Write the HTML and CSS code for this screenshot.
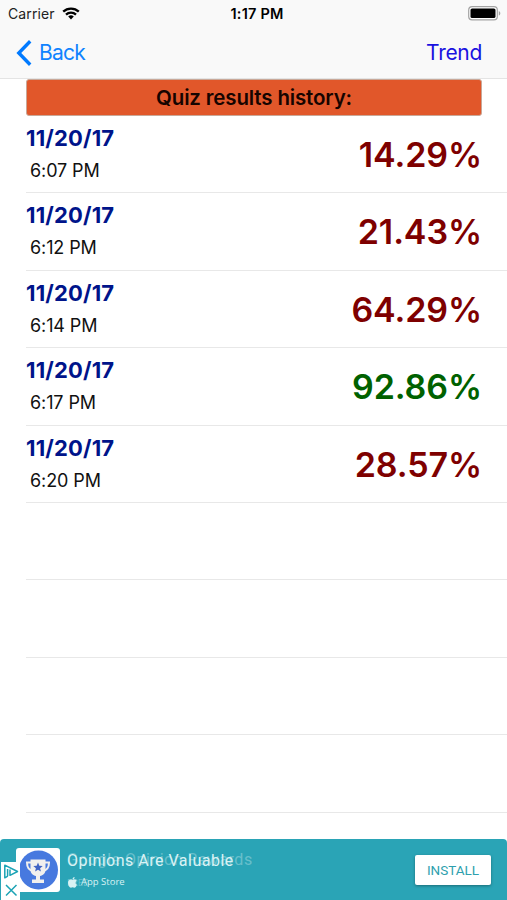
FILE: index.html
```html
<!DOCTYPE html>
<html lang="en">
<head>
  <meta charset="UTF-8" />
  <meta name="viewport" content="width=device-width, initial-scale=1.0" />
  <title>Quiz results history</title>
  <link rel="stylesheet" href="styles.css">
</head>
<body>

  <header class="top">
    <div class="status-bar">
      <div class="carrier">
        <span class="carrier-name">Carrier</span>
        <svg class="wifi" width="18" height="13" viewBox="0 0 18 13" fill="none" stroke="#000" stroke-width="2.3">
          <path d="M1.2 4.700a11.200 11.200 0 0 1 15.600 0" />
          <path d="M4 7.600a7.200 7.200 0 0 1 10 0" />
          <path d="M9 12.400L6.200 9.600a4 4 0 0 1 5.600 0z" fill="#000" stroke="none" />
        </svg>
      </div>
      <span class="clock">1:17 PM</span>
      <svg class="battery" width="33" height="15" viewBox="0 0 33 15">
        <rect x="0.7" y="0.7" width="28.6" height="13.2" rx="3.4" fill="#fff" stroke="#a3a3a3" stroke-width="1.2" />
        <rect x="2.5" y="2.5" width="25" height="9.6" rx="1.6" fill="#000" />
        <path d="M30.800 5v4.600c2-.8 2-3.800 0-4.600z" fill="#a3a3a3" />
      </svg>
    </div>
    <nav class="nav-bar">
      <a class="back" href="#">
        <svg width="16" height="26" viewBox="0 0 16 26" fill="none" stroke="#007aff" stroke-width="3.4">
          <path d="M14.200 1.300L2.800 13l11.400 11.700" />
        </svg>
        <span class="back-text">Back</span>
      </a>
      <a class="trend" href="#">Trend</a>
    </nav>
  </header>

  <main class="content">
    <h1 class="title">Quiz results history:</h1>
    <ul class="results">
      <li class="row">
        <div class="when"><span class="date">11/20/17</span><span class="time">6:07 PM</span></div>
        <span class="score bad">14.29%</span>
      </li>
      <li class="row">
        <div class="when"><span class="date">11/20/17</span><span class="time">6:12 PM</span></div>
        <span class="score bad">21.43%</span>
      </li>
      <li class="row">
        <div class="when"><span class="date">11/20/17</span><span class="time">6:14 PM</span></div>
        <span class="score bad">64.29%</span>
      </li>
      <li class="row">
        <div class="when"><span class="date">11/20/17</span><span class="time">6:17 PM</span></div>
        <span class="score good">92.86%</span>
      </li>
      <li class="row">
        <div class="when"><span class="date">11/20/17</span><span class="time">6:20 PM</span></div>
        <span class="score bad">28.57%</span>
      </li>
      <li class="row"></li>
      <li class="row"></li>
      <li class="row"></li>
      <li class="row"></li>
    </ul>
  </main>

  <footer class="ad">
    <div class="ad-icon">
      <svg width="44" height="44" viewBox="0 0 44 44">
        <circle cx="22.5" cy="22" r="19.5" fill="#4779df" />
        <path d="M16 14.500h-5c0 5 2 8 6.500 8.500M28 14.500h5c0 5-2 8-6.500 8.500" fill="none" stroke="#f1f0ee" stroke-width="2" />
        <path d="M14.500 11.500h15v10c0 4-2.500 6-5.500 6.500v3.500h4v3.500H16v-3.500h4V28c-3-.5-5.500-2.500-5.500-6.500z" fill="#f1f0ee" />
        <path d="M22 14.500l1.300 3.200 3.400.3-2.600 2.200.8 3.300-2.900-1.800-2.900 1.800.8-3.300-2.600-2.200 3.400-.3z" fill="#3f63c4" />
      </svg>
    </div>
    <div class="ad-text">
      <div class="ad-title">
        <span>Opinions Are Valuable</span>
        <span class="ghost">Google Opinion Rewards</span>
      </div>
      <div class="ad-store">
        <svg width="11" height="11" viewBox="0 0 11 11" fill="#d9f2f4">
          <path d="M5.500 3C4 2.100 1 2.500 1 5.800 1 8.500 2.600 10.800 3.900 10.700c.7-.1 1-.4 1.700-.4s1 .4 1.700.4c1.200 0 2.200-1.800 2.600-3-1.800-.8-1.800-3.100-.2-4C8.600 2.300 6.700 2.500 5.500 3z" />
          <path d="M5.500 2.500C5.400 1.300 6.400.3 7.600.1c.1 1.300-.9 2.300-2.100 2.400z" />
        </svg>
        <span>App Store</span>
        <span class="ghost store-ghost">FREE</span>
      </div>
    </div>
    <button class="install">INSTALL</button>
    <div class="ad-choices">
      <svg width="19" height="38" viewBox="0 0 19 38" fill="none" stroke="#1ba3b5" stroke-width="1.5">
        <path d="M6.800 14.200L3.800 15.800V3.200L16.500 9.500 9 13.300V7.500" stroke-linejoin="round" />
        <path d="M6.600 7v7.200" />
        <path d="M5 23l10.500 10.500M15.500 23L5 33.500" />
      </svg>
    </div>
  </footer>

</body>
</html>
```
FILE: styles.css
```css
* {
  box-sizing: border-box;
}

body {
  margin: 0;
  height: 900px;
  display: flex;
  flex-direction: column;
  overflow: hidden;
  background: #fff;
  color: #000;
  font-family: Inter, "Liberation Sans", sans-serif;
}

a {
  text-decoration: none;
}

.top {
  height: 79px;
  flex: none;
  background: #f9f9f9;
  border-bottom: 1px solid #e4e4e4;
}

.status-bar {
  height: 27px;
  padding: 0 6px 0 8px;
  display: grid;
  grid-template-columns: 1fr auto 1fr;
  align-items: center;
}

.carrier {
  display: flex;
  align-items: center;
  gap: 7px;
  font-size: 14px;
  letter-spacing: 0.1px;
  color: #222;
}

.clock {
  margin-left: 5px;
  font-size: 14.5px;
  font-weight: 600;
  letter-spacing: 0.2px;
}

.battery {
  justify-self: end;
}

.nav-bar {
  height: 51px;
  padding: 0 25px 0 16px;
  display: flex;
  align-items: center;
  justify-content: space-between;
  font-size: 21px;
}

.back {
  display: flex;
  align-items: center;
  gap: 7px;
  color: #1083ff;
  letter-spacing: -0.8px;
}

.trend {
  color: #1a12e0;
  letter-spacing: -0.3px;
}

.content {
  flex: none;
  height: 760px;
  padding-left: 26px;
  overflow: hidden;
}

.title {
  height: 37px;
  margin: 0 25px 0 0;
  border: 1px solid #c9a898;
  border-radius: 3px;
  background: #e1572a;
  color: #160400;
  font-size: 20.5px;
  line-height: 36px;
  font-weight: 600;
  letter-spacing: -0.15px;
  text-align: center;
}

.results {
  margin: 0;
  padding: 0;
  list-style: none;
}

.row {
  height: 77.4px;
  padding-right: 25px;
  display: flex;
  justify-content: space-between;
  border-bottom: 1px solid #e8e8e8;
}

.when {
  display: flex;
  flex-direction: column;
}

.date {
  margin-top: 8px;
  font-size: 22px;
  line-height: 28px;
  font-weight: 700;
  letter-spacing: 0.15px;
  color: #00148a;
}

.time {
  margin: 7px 0 0 4px;
  font-size: 18px;
  line-height: 24px;
  letter-spacing: -0.1px;
  color: #111;
}

.score {
  margin-top: 18px;
  font-size: 34px;
  line-height: 42px;
  font-weight: 600;
  letter-spacing: -0.1px;
}

.bad {
  color: #7e0000;
}

.good {
  color: #006100;
}

.ad {
  position: relative;
  flex: none;
  height: 61px;
  padding: 0 16px;
  display: flex;
  align-items: center;
  background: #2aa4b6;
  border-radius: 4px 4px 0 0;
  font-family: Roboto, sans-serif;
}

.ad-icon {
  width: 44px;
  height: 44px;
  border-radius: 3px;
  background: #fff;
}

.ad-text {
  flex: 1;
  margin-left: 7px;
  color: #d9f2f4;
}

.ad-title {
  position: relative;
  font-size: 16px;
  line-height: 20px;
  letter-spacing: 0.5px;
  white-space: nowrap;
}

/* outgoing text of the ad's cross-fade */
.ghost {
  position: absolute;
  left: 0;
  top: -1px;
  opacity: 0.35;
}

.ad-store {
  position: relative;
  margin-top: 5px;
  display: flex;
  align-items: center;
  gap: 3px;
  font-family: "Open Sans", sans-serif;
  font-size: 9.5px;
  line-height: 12px;
}

.store-ghost {
  top: 1px;
}

.install {
  width: 76px;
  height: 30px;
  padding: 0;
  border: none;
  border-radius: 2px;
  background: #fff;
  box-shadow: 0 1px 3px rgba(0, 0, 0, 0.35);
  color: #2e9fae;
  font-family: Roboto, sans-serif;
  font-size: 13.5px;
}

.ad-choices {
  position: absolute;
  left: 1px;
  bottom: 0;
  width: 19px;
  height: 38px;
  background: #fff;
}

.ad-choices svg {
  display: block;
}
```
